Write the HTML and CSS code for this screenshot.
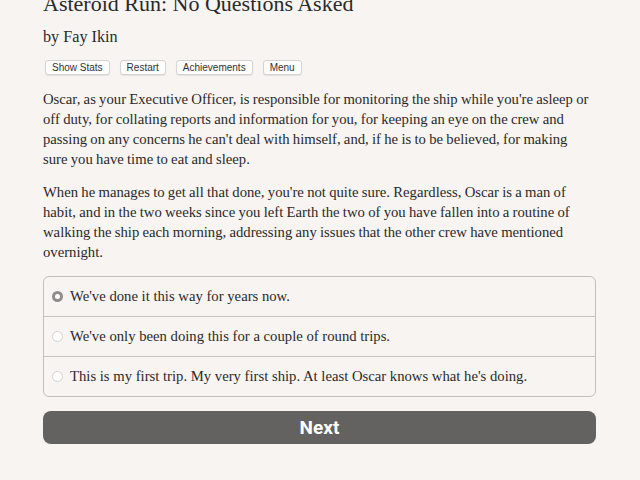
FILE: index.html
```html
<!DOCTYPE html>
<html>
<head>
<meta charset="utf-8">
<link rel="stylesheet" href="styles.css">
</head>
<body>
<div class="page">
  <h1 class="title">Asteroid Run: No Questions Asked</h1>
  <h2 class="author">by Fay Ikin</h2>
  <div class="buttons">
    <button class="btn">Show Stats</button>
    <button class="btn">Restart</button>
    <button class="btn">Achievements</button>
    <button class="btn">Menu</button>
  </div>
  <p class="para">Oscar, as your Executive Officer, is responsible for monitoring the ship while you're asleep or off duty, for collating reports and information for you, for keeping an eye on the crew and passing on any concerns he can't deal with himself, and, if he is to be believed, for making sure you have time to eat and sleep.</p>
  <p class="para">When he manages to get all that done, you're not quite sure. Regardless, Oscar is a man of habit, and in the two weeks since you left Earth the two of you have fallen into a routine of walking the ship each morning, addressing any issues that the other crew have mentioned overnight.</p>
  <div class="choices">
    <label class="choice"><span class="radio checked"></span>We've done it this way for years now.</label>
    <label class="choice"><span class="radio"></span>We've only been doing this for a couple of round trips.</label>
    <label class="choice"><span class="radio"></span>This is my first trip. My very first ship. At least Oscar knows what he's doing.</label>
  </div>
  <button class="next">Next</button>
</div>
</body>
</html>
```
FILE: styles.css
```css
html, body {
  margin: 0;
  background: #f7f4f1;
}
.page {
  width: 553px;
  padding: 0 44px 0 43px;
  font-family: "Liberation Serif", serif;
  color: #2a2a2a;
}
.title {
  font-size: 22px;
  font-weight: normal;
  margin: -11px 0 0 0;
  line-height: 30px;
}
.author {
  font-size: 16.2px;
  font-weight: normal;
  margin: 8px 0 0 0;
  line-height: 20px;
}
.buttons {
  display: flex;
  gap: 10px;
  margin: 13px 0 0 2px;
}
.btn {
  font-family: "Liberation Sans", sans-serif;
  font-size: 10px;
  color: #333;
  background: #fdfdfd;
  border: 1px solid #d6d3d0;
  border-radius: 3px;
  box-shadow: 0 1px 1px rgba(0,0,0,0.08);
  padding: 0 6px;
  height: 15px;
  line-height: 13px;
}
.para {
  font-size: 14.7px;
  word-spacing: -0.4px;
  line-height: 20px;
  margin: 14px 5px 0 0;
}
.para + .para {
  margin-top: 13px;
}
.choices {
  margin-top: 14px;
  border: 1px solid #c3bfbb;
  border-radius: 6px;
}
.choice {
  display: flex;
  align-items: center;
  height: 39px;
  font-size: 14.7px;
  padding-left: 8px;
  border-top: 1px solid #c8c4c0;
}
.choice:first-child {
  border-top: none;
  height: 39px;
}
.radio {
  width: 11px;
  height: 11px;
  border-radius: 50%;
  border: 1px solid #d3d0cd;
  background: #fff;
  margin-right: 7px;
  box-sizing: border-box;
  flex: none;
}
.radio.checked {
  background: #fff;
  border: 3px solid #8f8d8b;
}
.next {
  display: block;
  width: 100%;
  margin-top: 14px;
  height: 33px;
  background: #636260;
  color: #fff;
  border: none;
  border-radius: 8px;
  font-family: "Roboto", "Liberation Sans", sans-serif;
  font-weight: bold;
  font-size: 19px;
}
```
